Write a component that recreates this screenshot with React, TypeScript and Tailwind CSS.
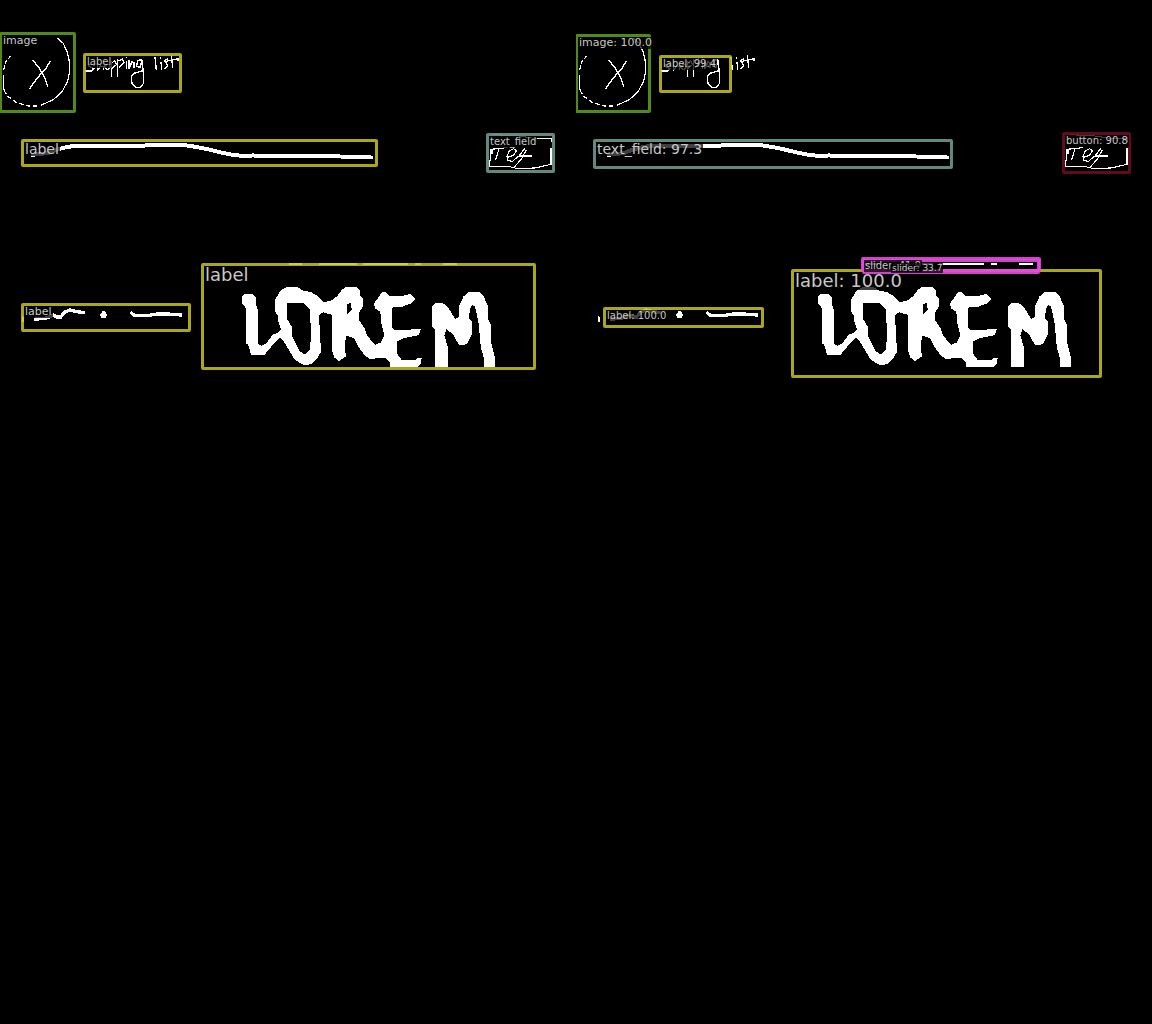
type Kind = "image" | "label" | "field" | "button" | "slider";

type Detection = {
  text: string;
  kind: Kind;
  place: string;
  size: string;
  tag?: string;
};

const BORDER: Record<Kind, string> = {
  image: "border-[#56901e]/95",
  label: "border-[#c8c618]/85",
  field: "border-[#688f85]/95",
  button: "border-[#680c20]/95",
  slider: "border-[#e848e0]/90",
};

const XS = "text-[9px] leading-[10px]";
const SM = "text-[10px] leading-[12px]";
const MD = "text-[11px] leading-[12px]";
const LG = "text-[14px] leading-[14px]";
const XL = "text-[18px] leading-[18px]";

const TRUTH: Detection[] = [
  { text: "image", kind: "image", place: "left-[-1px] top-[32px] w-[77px] h-[81px]", size: MD },
  { text: "label", kind: "label", place: "left-[83px] top-[53px] w-[99px] h-[40px]", size: SM },
  { text: "label", kind: "label", place: "left-[21px] top-[139px] w-[357px] h-[28px]", size: LG },
  { text: "text_field", kind: "field", place: "left-[486px] top-[133px] w-[69px] h-[40px]", size: SM },
  { text: "label", kind: "label", place: "left-[201px] top-[263px] w-[335px] h-[107px]", size: XL },
  { text: "label", kind: "label", place: "left-[21px] top-[303px] w-[170px] h-[29px]", size: MD },
];

const PREDICTED: Detection[] = [
  { text: "image: 100.0", kind: "image", place: "left-[-1px] top-[34px] w-[76px] h-[79px]", size: MD },
  { text: "label: 99.4", kind: "label", place: "left-[83px] top-[55px] w-[73px] h-[38px]", size: SM },
  { text: "text_field: 97.3", kind: "field", place: "left-[17px] top-[139px] w-[360px] h-[30px]", size: LG },
  { text: "button: 90.8", kind: "button", place: "left-[486px] top-[132px] w-[69px] h-[42px]", size: SM },
  { text: "label: 100.0", kind: "label", place: "left-[215px] top-[269px] w-[311px] h-[109px]", size: XL },
  { text: "label: 100.0", kind: "label", place: "left-[27px] top-[307px] w-[161px] h-[21px]", size: SM },
  {
    text: "slider: 41.9",
    kind: "slider",
    place: "left-[285px] top-[257px] w-[180px] h-[15px]",
    size: SM,
    tag: "left-0 top-0 z-10",
  },
  {
    text: "slider: 33.7",
    kind: "slider",
    place: "left-[286px] top-[259px] w-[178px] h-[15px]",
    size: XS,
    tag: "left-[26px] top-px z-10",
  },
];

function Sketch() {
  return (
    <svg
      className="absolute left-0 top-0"
      width="576"
      height="400"
      viewBox="0 0 576 400"
      fill="none"
      stroke="#fff"
      shapeRendering="crispEdges"
      aria-hidden="true"
    >
      {/* round picture placeholder with a cross */}
      <g transform="translate(0 25) scale(.33333)" strokeWidth="3.6">
        <path d="M170 38L190 55L203 85L209 115V140L203 168L187 199L160 224L122 241" />
        <path d="M112 243L85 243L50 233L25 215L14 200" strokeDasharray="14 7" />
        <path d="M14 200L10 185V150" />
        <path d="M11 135L17 110L32 93" strokeDasharray="14 5" />
        <path d="M97 105L115 125L130 150L137 166L143 185M152 107L139 128L120 150L100 175L88 193" strokeWidth="4.200" />
      </g>
      {/* handwritten "shopping list" */}
      <g transform="translate(0 25) scale(.33333)" strokeWidth="4">
        <path d="M286 121L270 118L266 124L282 131L274 138H256M292 106V136L302 123L310 126V136M318 120L328 118L331 127L322 134L315 129V120" />
        <path d="M334 108V156M334 114L344 108L349 119L336 131M353 102V157M354 108L367 102L372 114L356 128M379 108V131M379 96V100M387 106V131L396 110L402 113V130" />
        <path d="M427 104L414 106L409 124L421 127L426 104L430 145V176L421 187H408L396 175L394 155L402 145L430 137" />
        <path d="M465 95L469 135M483 110L485 134M482 97V101M504 102L494 107L503 121L494 133M514 90L518 128M498 109L534 101V109" />
      </g>
      {/* long stroke across the row */}
      <path
        d="M31 155L48 153Q64 146 78 146H142L152 144.500H178Q196 146 217 151.500T252 155.500L325 156L371 157.500V159"
        strokeWidth="4"
      />
      {/* small framed scribble */}
      <g transform="translate(480 125) scale(.33333)" strokeWidth="3.200">
        <path d="M38 29L110 32L168 41H214V52M213 70V118L165 129L110 130L85 124H29L32 72" />
        <path
          d="M34 73L80 68M57 72L46 106M36 76V86M82 97L99 92L109 78L101 71L88 78L81 94L84 107L98 109L114 94M136 68L117 93H157M139 74L124 103L100 129"
          strokeWidth="3.600"
        />
      </g>
      {/* thin broken line above the big lettering */}
      <path d="M289 264H302M319 264H357M363 264H408M415 264H421M443 264H457" strokeWidth="2" />
      {/* short strokes to the left of the lettering */}
      <g transform="translate(10 295) scale(.33333)">
        <path
          d="M72 73L110 69L130 60L140 66H152L165 51L180 45L200 50L224 53M362 52L374 62L418 61L440 57H472L515 60"
          strokeWidth="10"
        />
        <path d="M277 48H285L291 58L287 70H276L270 61Z M35 60L43 67V78L35 84Z" fill="#fff" stroke="none" />
      </g>
      {/* big hand lettering */}
      <g transform="translate(195 255) scale(.33333)" fill="#fff" stroke="none" fillRule="evenodd">
        <path d="M141 125L150 117H172L184 128V150L188 165V265L200 273L214 265L232 240L250 232L258 222L248 195V180L240 170V135L258 105L275 97H308L325 107L350 112L370 125L387 142L408 137L425 125L440 105L450 97H485L494 105L496 122L504 130V155L492 172V195L510 222L515 240L540 270L558 262L568 240L558 200L556 170L540 160L537 145L552 125L560 112H574L582 122H625L645 117L660 132L648 145L622 155L590 158V215L600 226L678 222L672 240L625 250L605 260V295L620 315H660L668 308L680 310L678 325L670 335H585V322L570 308L525 312L508 300L490 275L478 250L455 242L450 260L452 305L432 318L418 308L412 290V180L385 172L372 180L378 290L370 305L350 328L325 330L300 315L285 290L268 262L256 248L240 262L208 300H168L160 270L153 265V160L141 145ZM275 145H325L345 165L348 240L345 285L330 298L315 290L300 262L290 240V215L275 190ZM455 150L468 142L470 165L455 180Z" />
        <path d="M711 155L722 145L742 143L758 155L780 192L792 185V155L805 125L820 111H855L866 125L880 155V195L888 210V260L900 310V335H868L865 300L858 280L850 200L840 155L832 150L825 160L822 190L832 200V235L815 268L792 270L775 240L755 222L748 240L758 275V335H720V225L711 215Z" />
      </g>
    </svg>
  );
}

function Panel({ name, items }: { name: string; items: Detection[] }) {
  return (
    <section aria-label={name} className="relative min-h-screen overflow-hidden">
      <Sketch />
      {items.map((item, i) => (
        <div key={i} className={`absolute rounded-[2px] border-[3px] ${BORDER[item.kind]} ${item.place}`}>
          <span
            className={`absolute whitespace-nowrap bg-black/75 px-px text-[#c8c8c8] ${item.size} ${item.tag ?? "left-0 top-0"}`}
          >
            {item.text}
          </span>
        </div>
      ))}
    </section>
  );
}

export default function App() {
  return (
    <main className="grid min-h-screen grid-cols-2 bg-black font-['DejaVu_Sans',sans-serif]">
      <Panel name="Ground truth" items={TRUTH} />
      <Panel name="Predictions" items={PREDICTED} />
    </main>
  );
}
